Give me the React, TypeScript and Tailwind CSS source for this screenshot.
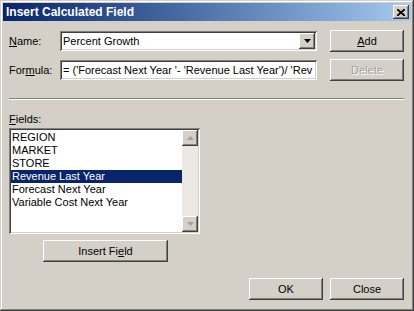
import React from "react";

const face = { fontFamily: '"Liberation Sans", Arial, sans-serif' };

function Btn({
  label,
  width,
  disabled,
}: {
  label: React.ReactNode;
  width: string;
  disabled?: boolean;
}) {
  return (
    <div
      className={`${width} flex h-[22px] items-center justify-center bg-[#d4d0c8] text-[11px] shadow-[inset_-1px_-1px_#404040,inset_1px_1px_#ffffff,inset_-2px_-2px_#808080,inset_2px_2px_#d4d0c8] ${
        disabled ? "text-[#a0a0a0] [text-shadow:1px_1px_#ffffff]" : "text-black"
      }`}
    >
      {label}
    </div>
  );
}

const sunken =
  "shadow-[inset_1px_1px_#808080,inset_-1px_-1px_#ffffff,inset_2px_2px_#404040,inset_-2px_-2px_#d4d0c8]";

function Arrow({ up }: { up?: boolean }) {
  return (
    <div className="flex h-[16px] w-[16px] items-center justify-center bg-[#d4d0c8] shadow-[inset_-1px_-1px_#404040,inset_1px_1px_#ffffff,inset_-2px_-2px_#808080,inset_2px_2px_#d4d0c8]">
      <svg width="7" height="4" viewBox="0 0 7 4">
        {up ? (
          <path d="M3.5 0 L7 4 L0 4 Z" fill="#a0a0a0" />
        ) : (
          <path d="M0 0 L7 0 L3.5 4 Z" fill="#a0a0a0" />
        )}
      </svg>
    </div>
  );
}

const fields = [
  "REGION",
  "MARKET",
  "STORE",
  "Revenue Last Year",
  "Forecast Next Year",
  "Variable Cost Next Year",
];

export default function App() {
  return (
    <div
      style={face}
      className="flex h-[311px] w-[414px] flex-col bg-[#d4d0c8] p-[3px] text-black shadow-[inset_-1px_-1px_#404040,inset_1px_1px_#d4d0c8,inset_-2px_-2px_#808080,inset_2px_2px_#ffffff]"
    >
      {/* title bar */}
      <div className="flex h-[18px] items-center justify-between bg-gradient-to-r from-[#0a246a] to-[#a6caf0] pl-[3px] pr-[2px]">
        <span className="text-[12px] font-bold text-white">Insert Calculated Field</span>
        <div className="flex h-[14px] w-[16px] items-center justify-center bg-[#d4d0c8] shadow-[inset_-1px_-1px_#404040,inset_1px_1px_#ffffff,inset_-2px_-2px_#808080]">
          <svg width="8" height="7" viewBox="0 0 8 7">
            <path d="M0 0 L8 7 M8 0 L0 7" stroke="#000" strokeWidth="1.8" />
          </svg>
        </div>
      </div>

      <div className="flex flex-1 flex-col pl-[6px] pr-[7px]">
        {/* name */}
        <div className="mt-[9px] flex h-[22px] items-center">
          <span className="w-[51px] text-[11px]">
            <u>N</u>ame:
          </span>
          <div className={`flex h-[20px] w-[257px] items-center bg-white pl-[3px] pr-[2px] ${sunken}`}>
            <span className="flex-1 text-[11px]">Percent Growth</span>
            <div className="flex h-[16px] w-[16px] items-center justify-center bg-[#d4d0c8] shadow-[inset_-1px_-1px_#404040,inset_1px_1px_#ffffff,inset_-2px_-2px_#808080]">
              <svg width="7" height="4" viewBox="0 0 7 4">
                <path d="M0 0 L7 0 L3.5 4 Z" fill="#000" />
              </svg>
            </div>
          </div>
          <div className="ml-[13px]">
            <Btn
              width="w-[74px]"
              label={
                <>
                  <u>A</u>dd
                </>
              }
            />
          </div>
        </div>

        {/* formula */}
        <div className="mt-[7px] flex h-[22px] items-center">
          <span className="w-[51px] text-[11px]">
            For<u>m</u>ula:
          </span>
          <div className={`flex h-[20px] w-[257px] items-center overflow-hidden whitespace-nowrap bg-white pl-[3px] ${sunken}`}>
            <span className="text-[11px]">= ('Forecast Next Year '- 'Revenue Last Year')/ 'Rev</span>
          </div>
          <div className="ml-[13px]">
            <Btn width="w-[74px]" label="Delete" disabled />
          </div>
        </div>

        {/* separator */}
        <div className="mt-[17px] h-[2px] w-[395px] border-t border-b border-t-[#808080] border-b-white" />

        <span className="mt-[13px] text-[11px] leading-[13px]">
          <u>F</u>ields:
        </span>

        {/* list */}
        <div className={`mt-[2px] flex h-[106px] w-[191px] bg-white p-[2px] ${sunken}`}>
          <div className="flex flex-1 flex-col pt-[1px]">
            {fields.map((f) => (
              <div
                key={f}
                className={`h-[13px] pl-[1px] text-[11px] leading-[13px] ${
                  f === "Revenue Last Year" ? "bg-[#0a246a] text-white" : ""
                }`}
              >
                {f}
              </div>
            ))}
          </div>
          <div className="flex w-[16px] flex-col justify-between bg-[#ece9e4]">
            <Arrow up />
            <Arrow />
          </div>
        </div>

        <div className="ml-[34px] mt-[6px]">
          <Btn
            width="w-[125px]"
            label={
              <>
                Insert Fi<u>e</u>ld
              </>
            }
          />
        </div>

        <div className="mt-[16px] flex justify-end gap-[7px]">
          <Btn width="w-[74px]" label="OK" />
          <Btn width="w-[74px]" label="Close" />
        </div>
      </div>
    </div>
  );
}
